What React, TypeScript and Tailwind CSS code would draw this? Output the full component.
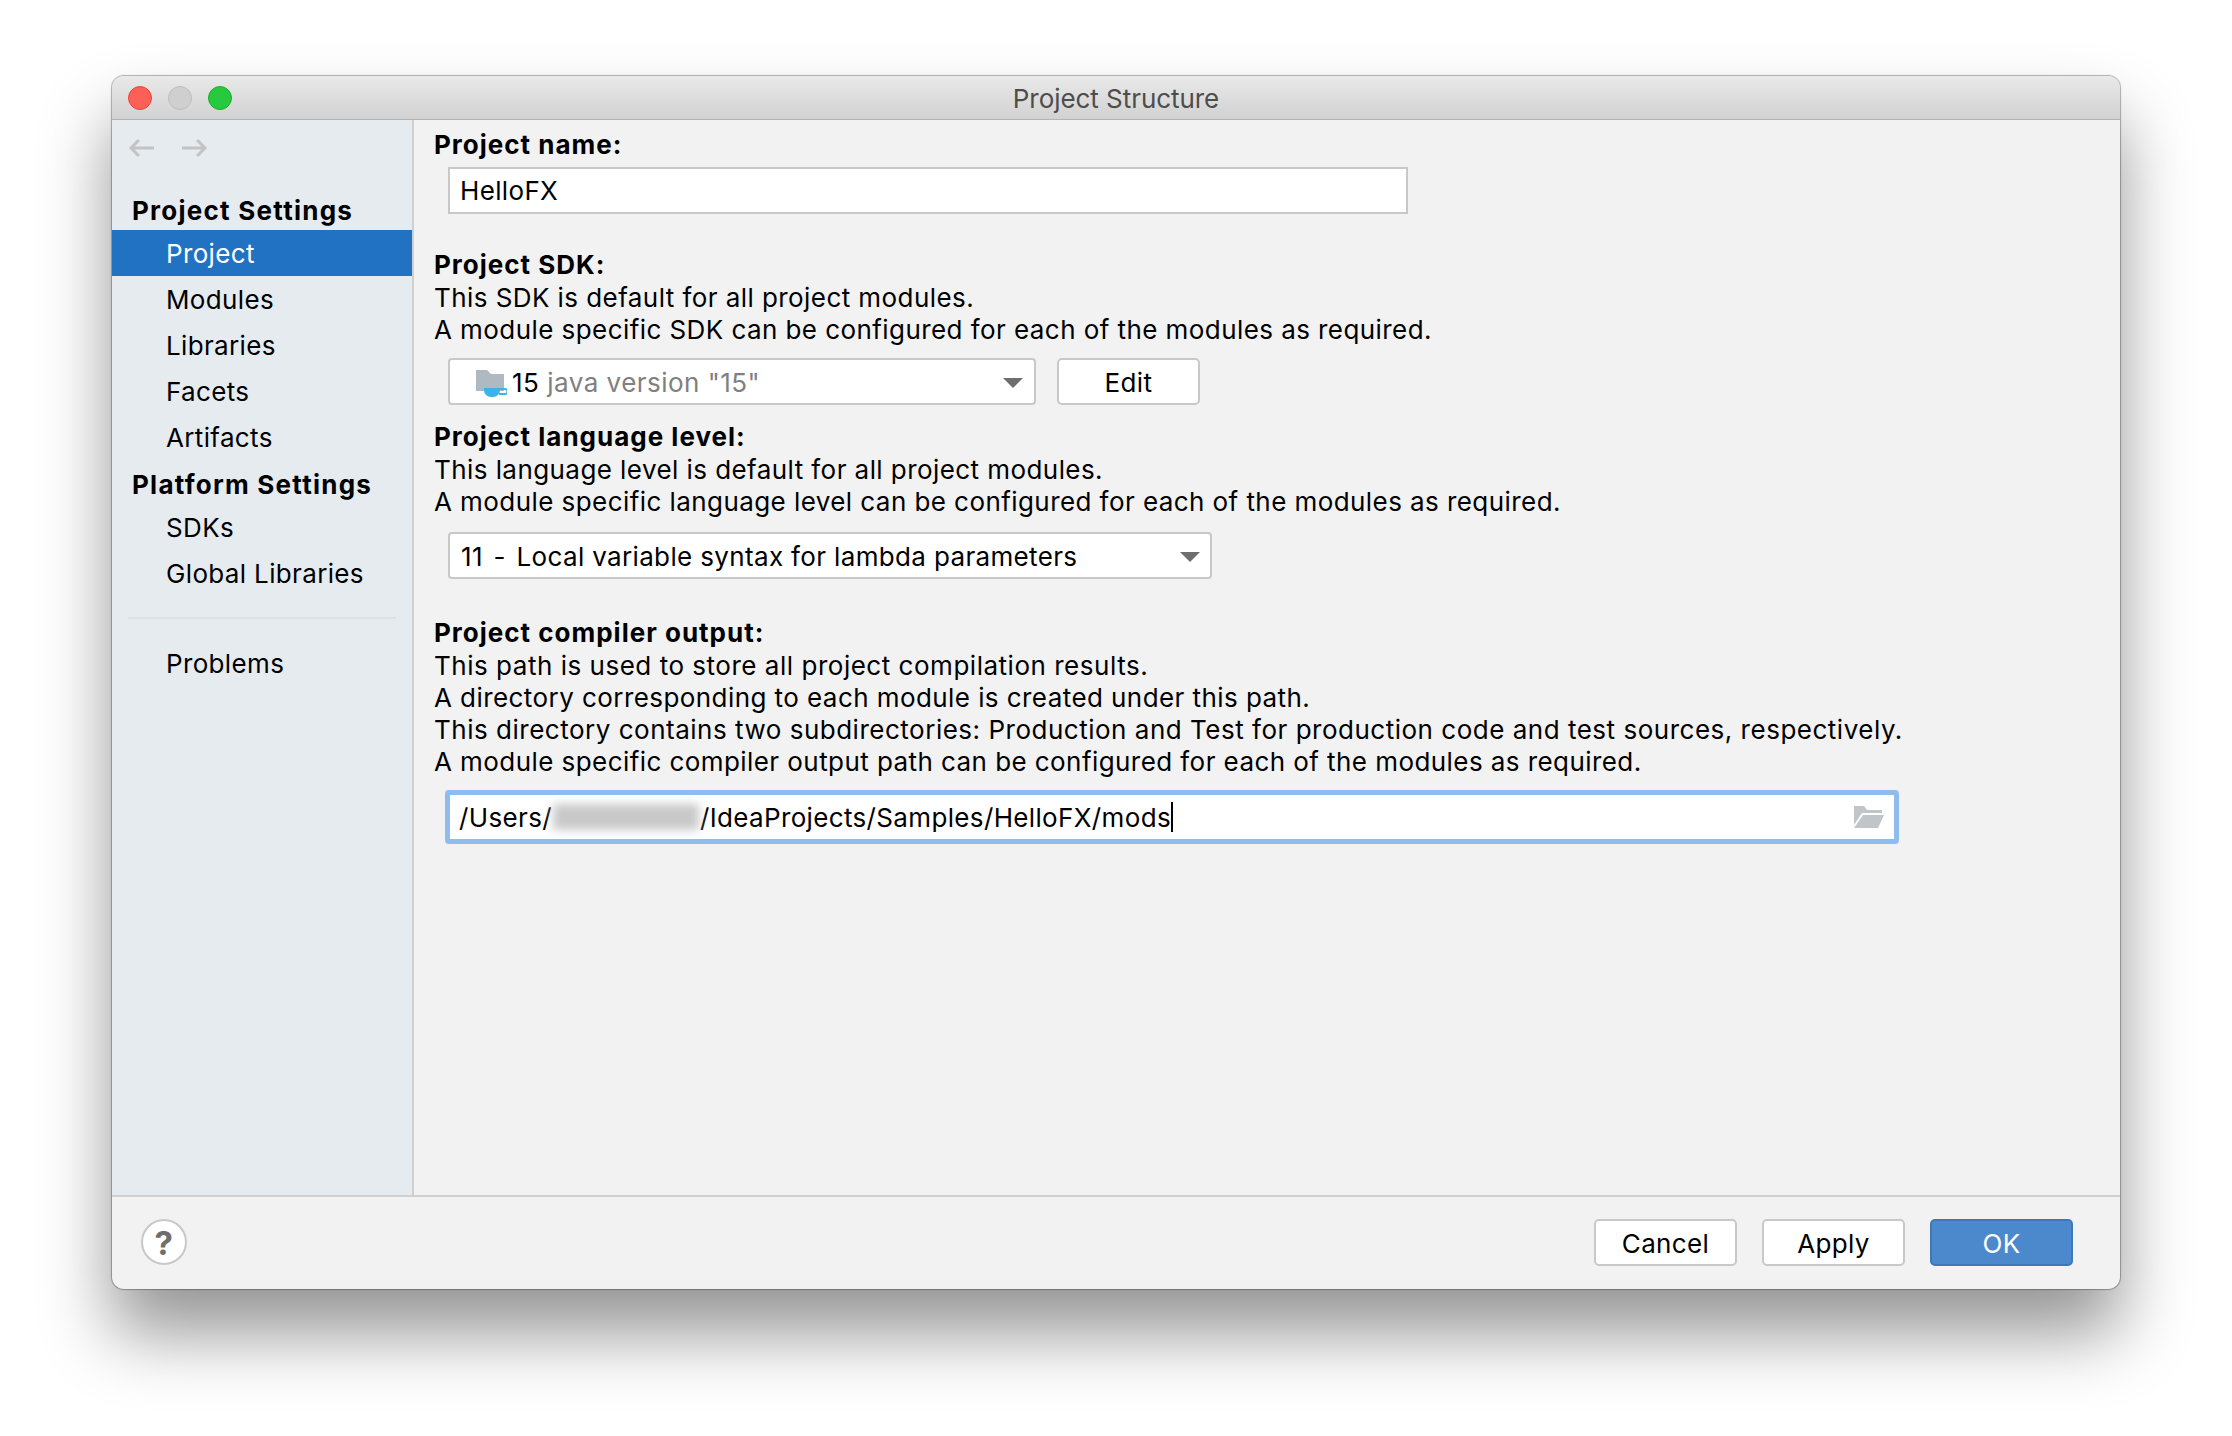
/**
 * Project Structure dialog, macOS IntelliJ style
 */

const FONT = "font-['Inter','Liberation_Sans',sans-serif]";

const SectionTitle = ({ children }: { children: React.ReactNode }) => (
  <div className="h-[32px] leading-[32px] font-bold tracking-[1px] text-black">{children}</div>
);

const HelpLine = ({ children }: { children: React.ReactNode }) => (
  <div className="h-[32px] pt-[1px] leading-[32px] tracking-[0.43px] text-black">{children}</div>
);

const Caret = () => (
  <svg width="20" height="12" viewBox="0 0 20 12" className="shrink-0">
    <path d="M0 1h20L10 11z" fill="#6e6e6e" />
  </svg>
);

const SidebarItem = ({ label, active }: { label: string; active?: boolean }) => (
  <div
    className={`h-[46px] pt-[1px] leading-[46px] pl-[54px] ${active ? 'bg-[#2172c3] text-white' : 'text-black'}`}
  >
    {label}
  </div>
);

const DialogButton = ({ label, primary }: { label: string; primary?: boolean }) => (
  <button
    className={`w-[143px] h-[47px] pt-[3px] rounded-[5px] border-2 leading-none ${
      primary
        ? 'bg-[#4c88cc] border-[#3f78b9] text-white'
        : 'bg-white border-[#c8c8c8] text-black'
    }`}
  >
    {label}
  </button>
);

export default function App() {
  return (
    <div className={`w-[2232px] h-[1436px] bg-white pt-[76px] pl-[112px] ${FONT} text-[26px] tracking-[0.35px]`}>
      <div className="w-[2008px] h-[1213px] rounded-[12px] overflow-hidden flex flex-col bg-[#f2f2f2] shadow-[0_0_1px_1px_rgba(0,0,0,0.3),0_44px_70px_rgba(0,0,0,0.42)]">
        {/* Title bar */}
        <div className="h-[44px] shrink-0 flex items-center relative bg-gradient-to-b from-[#e9e9e9] to-[#d2d2d2] border-b border-[#b4b4b4]">
          <div className="flex gap-[16px] pl-[16px]">
            <div className="w-[24px] h-[24px] rounded-full bg-[#fe5f57] border border-[#e2463f]" />
            <div className="w-[24px] h-[24px] rounded-full bg-[#cfcfcf] border border-[#bdbdbd]" />
            <div className="w-[24px] h-[24px] rounded-full bg-[#27c93f] border border-[#1eae2f]" />
          </div>
          <div className="absolute inset-0 flex items-center justify-center pt-[2px] tracking-[-0.05px] text-[#4d4d4d]">Project Structure</div>
        </div>

        <div className="flex-1 flex min-h-0">
          {/* Sidebar */}
          <div className="w-[302px] shrink-0 bg-[#e6ebf0] border-r-2 border-[#d0d0d0] flex flex-col">
            <div className="h-[56px] shrink-0 flex items-center gap-[28px] pl-[16px]">
              <svg width="26" height="20" viewBox="0 0 26 20" fill="none" stroke="#c3c3c3" strokeWidth="3">
                <path d="M26 10H3M11 2l-8 8 8 8" />
              </svg>
              <svg width="26" height="20" viewBox="0 0 26 20" fill="none" stroke="#c3c3c3" strokeWidth="3">
                <path d="M0 10h23M15 2l8 8-8 8" />
              </svg>
            </div>
            <div className="h-[14px] shrink-0" />
            <div className="h-[40px] pt-[1px] leading-[40px] pl-[20px] font-bold tracking-[1.25px] text-black">Project Settings</div>
            <SidebarItem label="Project" active />
            <SidebarItem label="Modules" />
            <SidebarItem label="Libraries" />
            <SidebarItem label="Facets" />
            <SidebarItem label="Artifacts" />
            <div className="h-[44px] pt-[5px] leading-[40px] pl-[20px] font-bold tracking-[1.25px] text-black">Platform Settings</div>
            <SidebarItem label="SDKs" />
            <SidebarItem label="Global Libraries" />
            <div className="h-[44px] shrink-0 flex items-center px-[16px]">
              <div className="h-[2px] w-full bg-[#dcdfe3]" />
            </div>
            <SidebarItem label="Problems" />
          </div>

          {/* Main form */}
          <div className="flex-1 pl-[20px] pt-[9px]">
            <SectionTitle>Project name:</SectionTitle>
            <div className="ml-[14px] mt-[6px] w-[960px] h-[47px] bg-white border-2 border-[#c8c8c8] flex items-center pl-[10px] leading-none text-black">
              HelloFX
            </div>

            <div className="mt-[35px]">
              <SectionTitle>Project SDK:</SectionTitle>
              <HelpLine>This SDK is default for all project modules.</HelpLine>
              <HelpLine>A module specific SDK can be configured for each of the modules as required.</HelpLine>
            </div>
            <div className="ml-[14px] mt-[13px] flex gap-[21px]">
              <div className="w-[588px] h-[47px] pt-[2px] bg-white border-2 border-[#c8c8c8] rounded-[4px] flex items-center pl-[25px] pr-[11px] tracking-[0.47px]">
                <svg width="32" height="28" viewBox="0 0 32 28" className="shrink-0 mr-[5px]">
                  <path d="M1 1h11l4 4h13v17H1z" fill="#afb9c2" />
                  <path d="M9 19h16v2a7 7 0 0 1-7 7h-2a7 7 0 0 1-7-7z" fill="#3ab3e6" />
                  <path d="M24 20h6a2 2 0 0 1 0 5h-6" fill="none" stroke="#3ab3e6" strokeWidth="2" />
                </svg>
                <span className="text-black">15</span>
                <span className="ml-[8px] text-[#808080]">java version "15"</span>
                <span className="ml-auto">
                  <Caret />
                </span>
              </div>
              <DialogButton label="Edit" />
            </div>

            <div className="mt-[16px]">
              <SectionTitle>Project language level:</SectionTitle>
              <HelpLine>This language level is default for all project modules.</HelpLine>
              <HelpLine>A module specific language level can be configured for each of the modules as required.</HelpLine>
            </div>
            <div className="ml-[14px] mt-[15px] w-[764px] h-[47px] pt-[2px] bg-white border-2 border-[#c8c8c8] rounded-[4px] flex items-center pl-[11px] pr-[10px] text-black">
              <span>
                11 <span className="mx-[3px]">-</span> Local variable syntax for lambda parameters
              </span>
              <span className="ml-auto">
                <Caret />
              </span>
            </div>

            <div className="mt-[38px]">
              <SectionTitle>Project compiler output:</SectionTitle>
              <HelpLine>
                <span className="tracking-[0.52px]">This path is used to store all project compilation results.</span>
              </HelpLine>
              <HelpLine>A directory corresponding to each module is created under this path.</HelpLine>
              <HelpLine>
                <span className="tracking-[0.51px]">This directory contains two subdirectories: Production and Test for production code and test sources, respectively.</span>
              </HelpLine>
              <HelpLine>A module specific compiler output path can be configured for each of the modules as required.</HelpLine>
            </div>
            <div className="ml-[11px] mt-[13px] w-[1454px] h-[54px] bg-white border-[5px] border-[#8fbcee] rounded-[4px] flex items-center pl-[9px] pr-[9px] text-black">
              <span>/Users/</span>
              <span className="w-[146px] h-[26px] mx-[1px] bg-[#c9c9c9] blur-[5px]" />
              <span>/IdeaProjects/Samples/HelloFX/mods</span>
              <span className="w-[2px] h-[30px] bg-black" />
              <svg width="32" height="24" viewBox="0 0 32 24" className="ml-auto shrink-0">
                <path d="M1 1h10l3 4h15v3H9L1 20z" fill="#c0c5c9" />
                <path d="M10 10h21l-6 13H1z" fill="#c0c5c9" />
              </svg>
            </div>
          </div>
        </div>

        {/* Bottom bar */}
        <div className="h-[94px] shrink-0 border-t-2 border-[#d0d0d0] flex items-center pl-[29px] pr-[47px] gap-[25px] pb-[2px]">
          <div className="w-[46px] h-[46px] pt-[3px] rounded-full bg-white border-2 border-[#c8c8c8] flex items-center justify-center font-bold text-[33px] text-[#6e6e6e] mr-auto">
            ?
          </div>
          <DialogButton label="Cancel" />
          <DialogButton label="Apply" />
          <DialogButton label="OK" primary />
        </div>
      </div>
    </div>
  );
}
